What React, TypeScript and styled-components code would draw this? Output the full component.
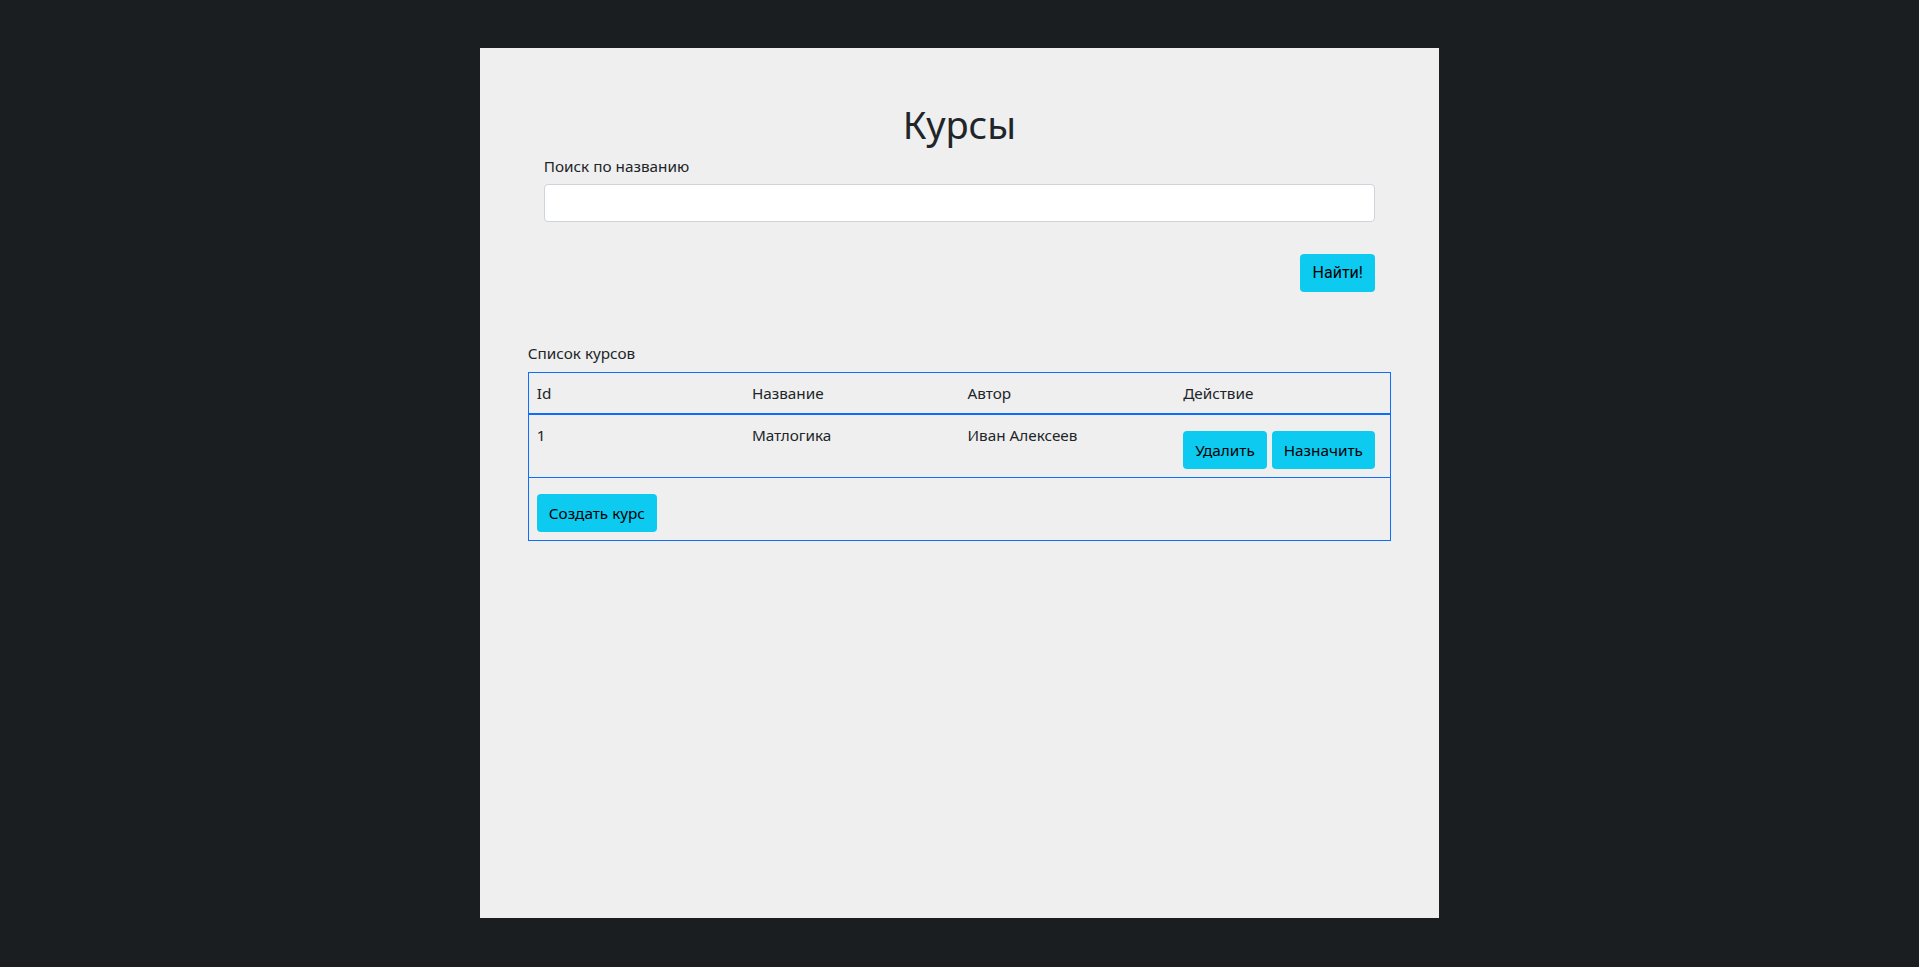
import styled, { createGlobalStyle } from "styled-components";

const GlobalStyle = createGlobalStyle`
  body {
    margin: 0;
    background-color: #1b1e21;
    font-family: "Noto Sans", "Open Sans", sans-serif;
    color: #212529;
  }
`;

const courses = [{ id: 1, name: "Матлогика", author: "Иван Алексеев" }];

const App = () => {
  return (
    <>
      <GlobalStyle />
      <Page>
        <Panel>
          <Title>Курсы</Title>
          <SearchForm onSubmit={(e) => e.preventDefault()}>
            <Label htmlFor="search">Поиск по названию</Label>
            <Input id="search" type="text" />
            <SubmitRow>
              <SearchButton type="submit">Найти!</SearchButton>
            </SubmitRow>
          </SearchForm>

          <Caption>Список курсов</Caption>
          <Table>
            <thead>
              <tr>
                <HeadCell>Id</HeadCell>
                <HeadCell>Название</HeadCell>
                <HeadCell>Автор</HeadCell>
                <HeadCell>Действие</HeadCell>
              </tr>
            </thead>
            <tbody>
              {courses.map((c) => (
                <BodyRow key={c.id}>
                  <Cell>{c.id}</Cell>
                  <Cell>{c.name}</Cell>
                  <Cell>{c.author}</Cell>
                  <Cell>
                    <Actions>
                      <Button>Удалить</Button>
                      <Button>Назначить</Button>
                    </Actions>
                  </Cell>
                </BodyRow>
              ))}
              <BodyRow>
                <Cell colSpan={4}>
                  <Actions>
                    <Button>Создать курс</Button>
                  </Actions>
                </Cell>
              </BodyRow>
            </tbody>
          </Table>
        </Panel>
      </Page>
    </>
  );
};

export default App;

const Page = styled.div`
  width: 100%;
  min-height: 100vh;
  padding-top: 48px;
  box-sizing: border-box;
`;

const Panel = styled.div`
  width: 50vw;
  height: 90vh;
  margin: 0 auto;
  padding: 52px 48px 0;
  box-sizing: border-box;
  background-color: #efefef;
`;

const Title = styled.h1`
  margin: 0;
  text-align: center;
  font-size: 38px;
  line-height: 48px;
  font-weight: 400;
`;

const SearchForm = styled.form`
  display: flex;
  flex-direction: column;
  padding: 0 16px;
  margin-top: 6px;
`;

const Label = styled.label`
  font-size: 15.3px;
  line-height: 24px;
`;

const Input = styled.input`
  margin-top: 6px;
  height: 38px;
  box-sizing: border-box;
  border: 1px solid #ced4da;
  border-radius: 4px;
  background-color: #fff;
  padding: 6px 12px;
  font-size: 16px;
  outline: none;
`;

const SubmitRow = styled.div`
  display: flex;
  justify-content: flex-end;
  margin-top: 32px;
`;

const Button = styled.button`
  height: 38px;
  padding: 0 12px;
  border: none;
  border-radius: 4px;
  background-color: #0dcaf0;
  color: #000;
  font-family: "Noto Sans", "Open Sans", sans-serif;
  font-size: 15.3px;
  line-height: 24px;
  cursor: pointer;
`;

const SearchButton = styled(Button)`
  width: 75px;
  padding: 0;
  font-family: Roboto, "Noto Sans", sans-serif;
  font-size: 16px;
`;

const Caption = styled.div`
  margin-top: 49px;
  font-size: 15.3px;
  line-height: 24px;
`;

const Table = styled.table`
  width: 100%;
  margin-top: 7px;
  border-collapse: collapse;
  border: 1px solid #0d6efd;
  font-size: 15.3px;
  line-height: 24px;
`;

const HeadCell = styled.th`
  width: 25%;
  padding: 8px;
  text-align: left;
  font-weight: 400;
  border-bottom: 2px solid #0d6efd;
`;

const BodyRow = styled.tr`
  border-bottom: 1px solid #0d6efd;
`;

const Cell = styled.td`
  padding: 8px;
  vertical-align: top;
`;

const Actions = styled.div`
  display: flex;
  gap: 5px;
  margin-top: 8px;
`;
